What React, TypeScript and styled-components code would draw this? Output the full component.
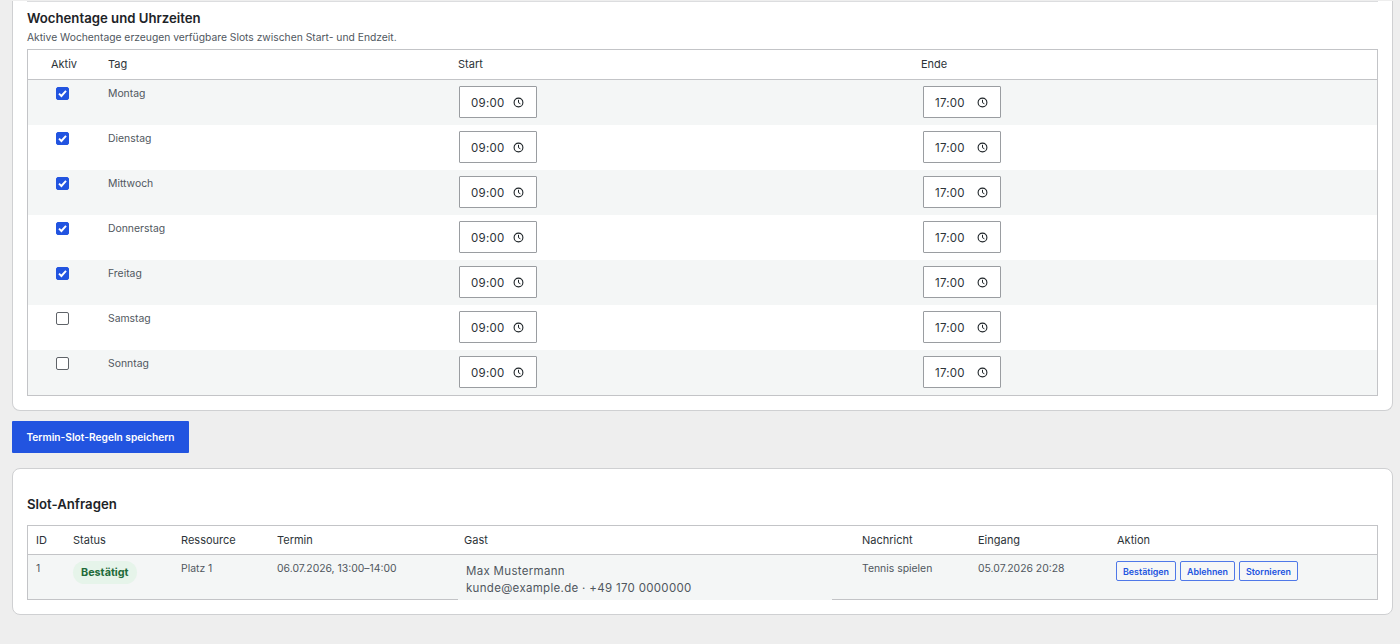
import styled, { createGlobalStyle } from "styled-components";

const GlobalStyle = createGlobalStyle`
    html, body {
        margin: 0;
        padding: 0;
        background: #eeeeee;
        font-family: Inter, "Liberation Sans", sans-serif;
        color: #1d2327;
    }
`;

const Page = styled.div`
    width: 1400px;
    height: 644px;
    overflow: hidden;
    box-sizing: border-box;
    padding: 0 7px 0 12px;
`;

const Card = styled.section`
    box-sizing: border-box;
    background: #fff;
    border: 1px solid #cfd0d2;
    border-radius: 8px;
    padding: 0 14px 14px;
`;

const RulesCard = styled(Card)`
    border-top: 0;
    border-radius: 0 0 8px 8px;
    height: 410px;
`;

const RequestsCard = styled(Card)`
    height: 147px;
    padding-top: 25px;
`;

const Divider = styled.hr`
    margin: 1px 0 0;
    border: 0;
    border-top: 1px solid #dcdddf;
`;

const Title = styled.h2`
    margin: 6px 0 0;
    font-size: 13.2px;
    line-height: 20px;
    font-weight: 600;
`;

const Hint = styled.p`
    margin: 1px 0 4px;
    font-size: 10.3px;
    line-height: 16px;
    color: #50575e;
`;

const TableFrame = styled.div`
    border: 1px solid #c3c4c7;
`;

const Table = styled.table`
    width: 100%;
    border-collapse: separate;
    border-spacing: 0;
    table-layout: fixed;
`;

const Head = styled.th<{ $center?: boolean }>`
    box-sizing: border-box;
    height: 30px;
    padding: 0 8px 1px;
    border-bottom: 1px solid #c3c4c7;
    font-size: 11px;
    font-weight: 400;
    color: #2c3338;
    text-align: ${({ $center }) => ($center ? "center" : "left")};
`;

const CompactHead = styled(Head)`
    height: 29px;
`;

const Row = styled.tr<{ $striped?: boolean }>`
    background: ${({ $striped }) => ($striped ? "#f4f6f6" : "#fff")};
`;

const Cell = styled.td`
    padding: 8px;
    vertical-align: top;
    font-size: 10.4px;
    line-height: 14px;
    color: #50575e;
`;

const DayCell = styled(Cell)`
    height: 45px;
    box-sizing: border-box;
    padding-top: 7px;
`;

const CheckCell = styled(DayCell)`
    padding: 7px 4px 0 0;
    text-align: center;
`;

const TimeCell = styled(DayCell)`
    padding: 6px 0 0 9px;
`;

const EndCell = styled(TimeCell)`
    padding-left: 10px;
`;

const CheckBox = styled.span<{ $checked: boolean }>`
    display: inline-flex;
    align-items: center;
    justify-content: center;
    box-sizing: border-box;
    width: 13px;
    height: 13px;
    border-radius: 2px;
    background: ${({ $checked }) => ($checked ? "#2254e0" : "#fff")};
    border: 1px solid ${({ $checked }) => ($checked ? "#2254e0" : "#5f6368")};
`;

const TimeBox = styled.span`
    display: inline-flex;
    align-items: center;
    justify-content: space-between;
    box-sizing: border-box;
    width: 78px;
    height: 32px;
    padding: 1px 13px 0 11px;
    background: #fff;
    border: 1px solid #9a9da1;
    border-radius: 1px;
    font-size: 11.5px;
    letter-spacing: 0.25px;
    color: #2c3338;
`;

const ClockIcon = styled.svg`
    margin: -1px -1px 0 0;
`;

const SaveButton = styled.button`
    display: block;
    box-sizing: border-box;
    width: 177px;
    height: 32px;
    margin: 10px 0 15px;
    padding: 0;
    border: 0;
    border-radius: 1px;
    background: #2254e0;
    color: #fff;
    font-family: inherit;
    font-size: 10.2px;
    font-weight: 600;
`;

const SectionTitle = styled(Title)`
    margin: 0 0 11px;
`;

const Badge = styled.span`
    display: inline-flex;
    align-items: center;
    height: 23px;
    margin-top: -1px;
    padding: 0 8px;
    border-radius: 12px;
    background: #e6f4ea;
    color: #1f6b3a;
    font-size: 10.8px;
    font-weight: 700;
`;

const RequestCell = styled(Cell)`
    height: 44px;
    box-sizing: border-box;
    padding-top: 7px;
`;

const GuestCell = styled(RequestCell)`
    padding: 0 22px 0 2px;
`;

const Guest = styled.div`
    position: relative;
    height: 45px;
    margin-bottom: -1px;
    box-sizing: border-box;
    padding: 8px 0 0 8px;
    background: #f4f6f6;
    font-size: 11.5px;
    line-height: 17px;
    letter-spacing: 0.31px;
`;

const Actions = styled.div`
    display: flex;
    gap: 4px;
    margin: -1px 0 0 -1px;
`;

const ActionButton = styled.button`
    height: 20px;
    box-sizing: border-box;
    padding: 0 6px;
    background: #f6f7f7;
    border: 1px solid #4f78e8;
    border-radius: 2px;
    color: #2254e0;
    font-family: inherit;
    font-size: 8.9px;
    font-weight: 600;
`;

const Check = () => (
    <svg width="11" height="11" viewBox="0 0 11 11" fill="none" aria-hidden="true">
        <path d="M2 5.6 4.4 8 9 2.8" stroke="#fff" strokeWidth="1.9" />
    </svg>
);

const Clock = () => (
    <ClockIcon width="11" height="11" viewBox="0 0 11 11" fill="none" aria-hidden="true">
        <circle cx="5.5" cy="5.5" r="4.4" stroke="#1d2327" strokeWidth="1.1" />
        <path d="M5.5 2.8v2.9l1.9 1.1" stroke="#1d2327" strokeWidth="1" />
    </ClockIcon>
);

const days = [
    { name: "Montag", active: true },
    { name: "Dienstag", active: true },
    { name: "Mittwoch", active: true },
    { name: "Donnerstag", active: true },
    { name: "Freitag", active: true },
    { name: "Samstag", active: false },
    { name: "Sonntag", active: false },
];

const App = () => (
    <Page>
        <GlobalStyle />
        <RulesCard>
            <Divider />
            <Title>Wochentage und Uhrzeiten</Title>
            <Hint>Aktive Wochentage erzeugen verfügbare Slots zwischen Start- und Endzeit.</Hint>
            <TableFrame>
                <Table>
                    <colgroup>
                        <col width="72" />
                        <col width="350" />
                        <col width="463" />
                        <col />
                    </colgroup>
                    <thead>
                        <tr>
                            <Head $center>Aktiv</Head>
                            <Head>Tag</Head>
                            <Head>Start</Head>
                            <Head>Ende</Head>
                        </tr>
                    </thead>
                    <tbody>
                        {days.map((day, i) => (
                            <Row key={day.name} $striped={i % 2 === 0}>
                                <CheckCell>
                                    <CheckBox $checked={day.active}>{day.active && <Check />}</CheckBox>
                                </CheckCell>
                                <DayCell>{day.name}</DayCell>
                                <TimeCell>
                                    <TimeBox>
                                        09:00
                                        <Clock />
                                    </TimeBox>
                                </TimeCell>
                                <EndCell>
                                    <TimeBox>
                                        17:00
                                        <Clock />
                                    </TimeBox>
                                </EndCell>
                            </Row>
                        ))}
                    </tbody>
                </Table>
            </TableFrame>
        </RulesCard>
        <SaveButton>Termin-Slot-Regeln speichern</SaveButton>
        <RequestsCard>
            <SectionTitle>Slot-Anfragen</SectionTitle>
            <TableFrame>
                <Table>
                    <colgroup>
                        <col width="37" />
                        <col width="108" />
                        <col width="96" />
                        <col width="187" />
                        <col width="398" />
                        <col width="116" />
                        <col width="139" />
                        <col />
                    </colgroup>
                    <thead>
                        <tr>
                            <CompactHead>ID</CompactHead>
                            <CompactHead>Status</CompactHead>
                            <CompactHead>Ressource</CompactHead>
                            <CompactHead>Termin</CompactHead>
                            <CompactHead>Gast</CompactHead>
                            <CompactHead>Nachricht</CompactHead>
                            <CompactHead>Eingang</CompactHead>
                            <CompactHead>Aktion</CompactHead>
                        </tr>
                    </thead>
                    <tbody>
                        <Row $striped>
                            <RequestCell>1</RequestCell>
                            <RequestCell>
                                <Badge>Bestätigt</Badge>
                            </RequestCell>
                            <RequestCell>Platz 1</RequestCell>
                            <RequestCell>06.07.2026, 13:00–14:00</RequestCell>
                            <GuestCell>
                                <Guest>
                                    Max Mustermann
                                    <br />
                                    kunde@example.de · +49 170 0000000
                                </Guest>
                            </GuestCell>
                            <RequestCell>Tennis spielen</RequestCell>
                            <RequestCell>05.07.2026 20:28</RequestCell>
                            <RequestCell>
                                <Actions>
                                    <ActionButton>Bestätigen</ActionButton>
                                    <ActionButton>Ablehnen</ActionButton>
                                    <ActionButton>Stornieren</ActionButton>
                                </Actions>
                            </RequestCell>
                        </Row>
                    </tbody>
                </Table>
            </TableFrame>
        </RequestsCard>
    </Page>
);

export default App;
